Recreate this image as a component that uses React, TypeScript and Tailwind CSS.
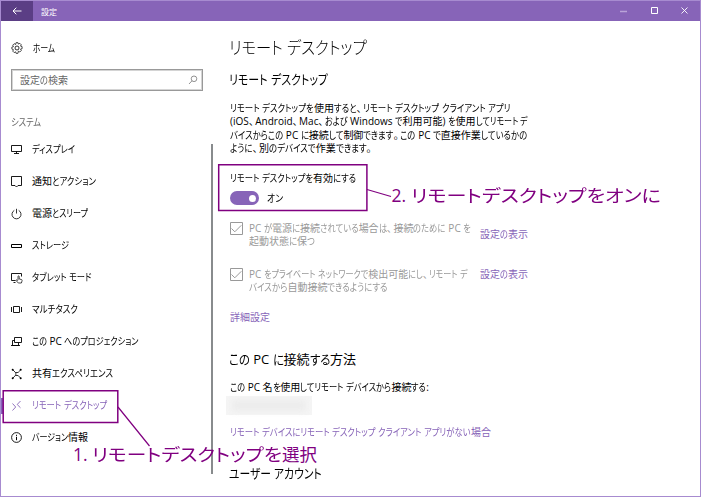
import React, { useLayoutEffect, useRef } from "react";

const SPLIT = /([\u3040-\u30ff]+|[\u3001\u3002])/;
const KANA = /^[\u3040-\u30ff]+$/;
const PUNCT = /^[\u3001\u3002]$/;

// One line of text: kanji and Latin keep their width, kana is condensed so the line is w pixels wide.
function Line({ w, children, className = "" }: { w: number; children: string; className?: string }) {
  const ref = useRef<HTMLSpanElement>(null);
  const parts = children.split(SPLIT).filter(Boolean);
  useLayoutEffect(() => {
    const root = ref.current;
    if (!root) return;
    const kana = Array.from(root.querySelectorAll<HTMLElement>("[data-kana]"));
    kana.forEach((k) => (k.style.width = "auto"));
    const sizes = kana.map((k) => k.getBoundingClientRect().width);
    const total = root.getBoundingClientRect().width;
    const kanaTotal = sizes.reduce((a, b) => a + b, 0);
    if (kanaTotal > 0) {
      const s = (w - (total - kanaTotal)) / kanaTotal;
      kana.forEach((k, i) => {
        k.style.width = `${sizes[i] * s}px`;
        (k.firstElementChild as HTMLElement).style.transform = `scaleX(${s})`;
      });
    } else {
      root.style.transform = `scaleX(${w / total})`;
    }
  }, [w, children]);
  return (
    <span className={`block whitespace-pre ${className}`}>
      <span ref={ref} className="inline-block origin-left">
        {parts.map((p, i) =>
          KANA.test(p) ? (
            <span key={i} data-kana="" className="inline-block align-baseline">
              <span className="inline-block origin-left">{p}</span>
            </span>
          ) : PUNCT.test(p) ? (
            <span key={i} className="inline-block w-[0.65em]">{p}</span>
          ) : (
            <span key={i}>{p}</span>
          ),
        )}
      </span>
    </span>
  );
}

function Icon({ name }: { name: string }) {
  return (
    <svg viewBox="0 0 12 12" className="h-3 w-3 shrink-0" fill="none" stroke="currentColor" strokeWidth="1">
      {name === "gear" && (
        <>
          <path d="M5 .7h2l.4 1.4 1.4-.8 1.5 1.5-.8 1.3 1.6.5v2.1l-1.6.4.8 1.4-1.5 1.5-1.4-.8L7 11.3H5l-.4-1.5-1.4.8-1.5-1.5.8-1.4L.9 7.1V5l1.6-.4-.8-1.4 1.5-1.5 1.4.8z" strokeWidth=".7" />
          <circle cx="6" cy="6" r="2" strokeWidth=".8" />
        </>
      )}
      {name === "display" && <path d="M.5 1.5h10v6H.5zM5.500 7.500v2M3 9.500h5" strokeWidth=".9" />}
      {name === "notify" && <path d="M.5 .5h10v9H7L5.500 11 4 9.500H.5z" strokeWidth=".9" />}
      {name === "power" && <path d="M3.300 2.400a4.500 4.500 0 1 0 4.400 0M5.500 .8v4.700" strokeWidth=".8" />}
      {name === "storage" && <path d="M.5 4.500h10v3H.5z" />}
      {name === "tablet" && (
        <>
          <path d="M4.500 8.500H.5v-7h10v3M2.500 10.500h2" strokeWidth=".9" />
          <path d="M7 8V4.500c0-.9 1.200-.9 1.200 0V7l2.200.5c.8.2.8.8.6 1.500l-.6 2H7.300L5 8.500c-.2-.8 1-1 2 .4" strokeWidth=".7" />
        </>
      )}
      {name === "multi" && <path d="M2.500 2.500h6v6h-6zM.5 3v5M10.500 3v5" strokeWidth=".9" />}
      {name === "project" && <path d="M3.500 1.500h7v5h-7zM3.500 4.500h-2v5h6v-3M0 9.500h9" strokeWidth=".9" />}
      {name === "share" && (
        <>
          <path d="M2 2l2.200 2.200c1 1 1 2.500 0 3.500L2 10M9.500 2L7.300 4.200M9.500 10L7.300 7.700M4.500 4.500h2.800M4.500 7.500h2.800" strokeWidth=".8" />
          <g fill="currentColor" stroke="none">
            <circle cx="1.700" cy="1.700" r="1" />
            <circle cx="9.700" cy="1.700" r="1" />
            <circle cx="1.700" cy="10.300" r="1" />
            <circle cx="9.700" cy="10.300" r="1" />
          </g>
        </>
      )}
      {name === "remote" && <path d="M1.500 3.500l3.200 3.500L1.500 10.500M9.500 1L6.200 4.500 9.500 7.800" strokeWidth=".9" />}
      {name === "info" && <><circle cx="5.500" cy="5.500" r="4.900" strokeWidth=".9" /><path d="M5.500 4.800v3.400M5.500 2.800v1.100" /></>}
    </svg>
  );
}

const items = [
  { icon: "display", label: "ディスプレイ", w: 43 },
  { icon: "notify", label: "通知とアクション", w: 64 },
  { icon: "power", label: "電源とスリープ", w: 56 },
  { icon: "storage", label: "ストレージ", w: 37 },
  { icon: "tablet", label: "タブレット モード", w: 60 },
  { icon: "multi", label: "マルチタスク", w: 46 },
  { icon: "project", label: "この PC へのプロジェクション", w: 107 },
  { icon: "share", label: "共有エクスペリエンス", w: 81 },
  { icon: "remote", label: "リモート デスクトップ", w: 75, active: true },
  { icon: "info", label: "バージョン情報", w: 56 },
];

function CheckBox() {
  return (
    <svg viewBox="0 0 13 13" className="mt-px h-[13px] w-[13px] shrink-0" fill="none" stroke="#999">
      <path d="M.5.5h12v12H.5z" />
      <path d="M1.500 6.500l3.300 3.300L11.300 3.300" />
    </svg>
  );
}

export default function App() {
  return (
    <div className="relative flex h-[497px] w-[701px] flex-col overflow-hidden border border-[#a78bd0] bg-white text-[10px] leading-[13px] text-black [font-feature-settings:'palt'] [font-family:'Open_Sans','Noto_Sans_CJK_JP',sans-serif]">
      <header className="flex h-5 shrink-0 items-center bg-[#8764b8] text-white">
        <div className="flex h-5 w-8 items-center justify-center bg-[#5b3e85]">
          <svg viewBox="0 0 10 8" className="h-2 w-[10px]" fill="none" stroke="white"><path d="M9.500 4H1M4.300.7L1 4l3.300 3.300" /></svg>
        </div>
        <Line w={16} className="ml-2 text-[8px]">設定</Line>
        <svg viewBox="0 0 80 10" className="ml-auto mr-px h-2.5 w-20" fill="none" stroke="white">
          <path d="M1 5.500h7" stroke="#b9a3d8" strokeWidth="1.500" />
          <path d="M32.500 1.500h6v6h-6z" />
          <path d="M62.500 1.500l6 6M68.500 1.500l-6 6" strokeWidth=".9" />
        </svg>
      </header>
      <div className="flex min-h-0 flex-1">
        <nav className="flex w-[210px] shrink-0 flex-col">
          <div className="mt-[19px] flex h-4 items-center gap-[9.5px] pl-2.5"><Icon name="gear" /><Line w={22}>ホーム</Line></div>
          <div className="ml-2.5 mt-[13px] flex h-[22px] w-[192px] items-center justify-between border border-[#999] pl-2 pr-1 text-[#666] shadow-[inset_0_0_0_1px_#d4d4d4]">
            <Line w={48}>設定の検索</Line>
            <svg viewBox="0 0 10 10" className="h-2.5 w-2.5" fill="none" stroke="#777" strokeWidth=".8"><circle cx="6" cy="3.800" r="2.800" /><path d="M4 5.800L1 9" /></svg>
          </div>
          <Line w={30} className="ml-2.5 mt-[25px] text-[#666]">システム</Line>
          <div className="mt-[4.5px] flex flex-col">
            {items.map((it) => (
              <div key={it.label} className={`flex h-8 items-center pl-2.5 ${it.active ? "text-[#8764b8]" : ""}`}>
                {it.active && <span className="-ml-2.5 mr-2 h-4 w-0.5 bg-[#8764b8]" />}
                <Icon name={it.icon} />
                <Line w={it.w} className="ml-[9px] leading-[11px]">{it.label}</Line>
              </div>
            ))}
          </div>
        </nav>
        <div className="mt-[123px] h-[330px] w-[1.5px] shrink-0 bg-[#888b8d]" />
        <main className="flex flex-col pl-[17.5px]">
          <Line w={138} className="-ml-px mt-[15px] text-[17.5px] leading-[22px] font-light">リモート デスクトップ</Line>
          <Line w={99} className="-ml-px mt-3 text-[13px] leading-[18px]">リモート デスクトップ</Line>
          <div className="mt-[14px] leading-[13.3px]">
            <Line w={281}>リモート デスクトップを使用すると、リモート デスクトップ クライアント アプリ</Line>
            <Line w={298}>(iOS、Android、Mac、および Windows で利用可能) を使用してリモート デ</Line>
            <Line w={297}>バイスからこの PC に接続して制御できます。この PC で直接作業しているかの</Line>
            <Line w={143}>ように、別のデバイスで作業できます。</Line>
          </div>
          <Line w={126} className="mt-[17px]">リモート デスクトップを有効にする</Line>
          <div className="mt-1.5 flex h-[14px] items-center">
            <span className="flex h-[14px] w-[29px] items-center justify-end rounded-full bg-[#8764b8] pr-[3px]"><span className="h-[7px] w-[7px] rounded-full bg-white" /></span>
            <Line w={16} className="ml-2">オン</Line>
          </div>
          <div className="mt-4 flex items-start text-[#999]">
            <CheckBox />
            <div className="ml-1.5 mt-px w-[231px]">
              <Line w={222}>PC が電源に接続されている場合は、接続のために PC を</Line>
              <Line w={66}>起動状態に保つ</Line>
            </div>
            <Line w={48} className="mt-[7px] text-[#8764b8]">設定の表示</Line>
          </div>
          <div className="mt-[19px] flex items-start text-[#999]">
            <CheckBox />
            <div className="ml-1.5 mt-px w-[231px]">
              <Line w={219}>PC をプライベート ネットワークで検出可能にし、リモート デ</Line>
              <Line w={139}>バイスから自動接続できるようにする</Line>
            </div>
            <Line w={48} className="mt-px text-[#8764b8]">設定の表示</Line>
          </div>
          <Line w={40} className="mt-[17px] text-[#8764b8]">詳細設定</Line>
          <Line w={127} className="-ml-px mt-[26px] text-[13px] leading-[18px]">この PC に接続する方法</Line>
          <Line w={199} className="mt-[13px]">この PC 名を使用してリモート デバイスから接続する:</Line>
          <div className="-ml-1 mt-0.5 h-[19px] w-[86px] bg-[#f5f5f5] px-1.5 py-1"><div className="h-full bg-[#ececec] blur-[3px]" /></div>
          <Line w={261} className="mt-[11px] text-[#8764b8]">リモート デバイスにリモート デスクトップ クライアント アプリがない場合</Line>
          <Line w={93} className="-ml-px mt-[25px] text-[13px] leading-[18px]">ユーザー アカウント</Line>
        </main>
      </div>
      <svg viewBox="0 0 699 495" className="pointer-events-none absolute left-0 top-0 h-[495px] w-[699px]" fill="none" stroke="#800080" strokeWidth="1.500">
        <path d="M2.200 389.700h114.600v31.800H2.200zM217.700 163.800h148.200v45.700H217.700z" />
        <path d="M117 406l31.500 39M366 188.500l24 7" strokeWidth="1.200" />
      </svg>
      <Line w={244} className="absolute left-[72px] top-[444.5px] text-[17.5px] leading-[16px] text-[#800080]">1. リモートデスクトップを選択</Line>
      <Line w={269} className="absolute left-[390.5px] top-[182.5px] text-[17.5px] leading-[22px] text-[#800080]">2. リモートデスクトップをオンに</Line>
    </div>
  );
}
